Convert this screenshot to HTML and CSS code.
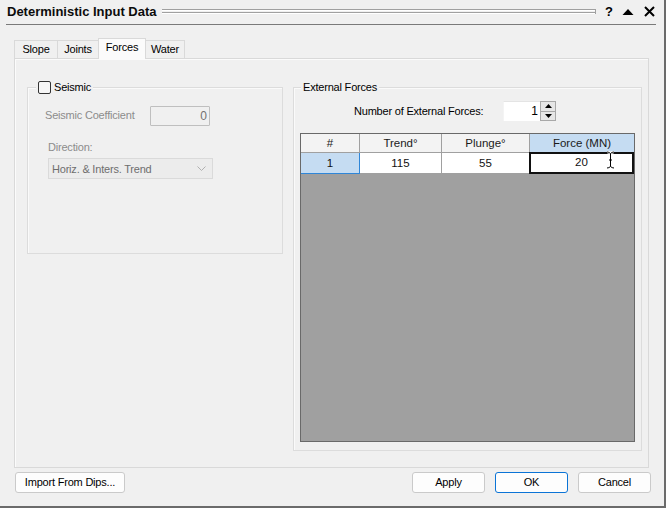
FILE: index.html
```html
<!DOCTYPE html>
<html>
<head>
<meta charset="utf-8">
<link rel="stylesheet" href="styles.css">
</head>
<body>
<div class="window">
  <div class="titlebar">
    <span class="title">Deterministic Input Data</span>
    <div class="title-lines"><div class="tl"></div><div class="tl"></div></div>
    <span class="tb-help">?</span>
    <svg class="tb-up" width="12" height="8" viewBox="0 0 12 8"><path d="M6 1 L11.5 7 L0.5 7 Z" fill="#000"/></svg>
    <svg class="tb-close" width="11" height="11" viewBox="0 0 11 11"><path d="M1 1 L10 10 M10 1 L1 10" stroke="#000" stroke-width="2"/></svg>
  </div>

  <div class="tabs">
    <div class="tab t-slope">Slope</div>
    <div class="tab t-joints">Joints</div>
    <div class="tab t-forces active">Forces</div>
    <div class="tab t-water">Water</div>
  </div>

  <div class="panel">
    <div class="group seismic">
      <div class="group-title"><span class="checkbox"></span><span class="cb-label">Seismic</span></div>
      <div class="row coef">
        <span class="lbl dis">Seismic Coefficient</span>
        <div class="numbox dis-box">0</div>
      </div>
      <div class="dir-lbl dis">Direction:</div>
      <div class="combo">
        <span>Horiz. &amp; Inters. Trend</span>
        <svg width="9" height="6" viewBox="0 0 9 6"><path d="M0.5 0.5 L4.5 4.5 L8.5 0.5" fill="none" stroke="#b0b0b0" stroke-width="1"/></svg>
      </div>
    </div>

    <div class="group external">
      <div class="group-title ext-title">External Forces</div>
      <div class="row count">
        <span class="lbl count-lbl">Number of External Forces:</span>
        <div class="spin-input">1</div>
        <div class="spin-btns">
          <div class="sb"><svg width="7" height="4" viewBox="0 0 7 4"><path d="M3.5 0 L7 4 L0 4 Z" fill="#000"/></svg></div>
          <div class="sb"><svg width="7" height="4" viewBox="0 0 7 4"><path d="M0 0 L7 0 L3.5 4 Z" fill="#000"/></svg></div>
        </div>
      </div>
      <div class="grid">
        <div class="hc">#</div>
        <div class="hc">Trend°</div>
        <div class="hc">Plunge°</div>
        <div class="hc hsel">Force (MN)</div>
        <div class="dc dsel">1</div>
        <div class="dc">115</div>
        <div class="dc">55</div>
        <div class="dc dedit">20</div>
        <div class="gfill"></div>
        <svg class="ibeam" width="9" height="18" viewBox="0 0 9 18"><path d="M1 1 Q3 1 4.5 2.5 Q6 1 8 1 M4.5 2.5 L4.5 15.5 M1 17 Q3 17 4.5 15.5 Q6 17 8 17 M3 9 L6 9" fill="none" stroke="#fff" stroke-width="2.6"/><path d="M1 1 Q3 1 4.5 2.5 Q6 1 8 1 M4.5 2.5 L4.5 15.5 M1 17 Q3 17 4.5 15.5 Q6 17 8 17 M3 9 L6 9" fill="none" stroke="#000" stroke-width="1"/></svg>
      </div>
    </div>
  </div>

  <div class="buttons">
    <div class="btn import">Import From Dips...</div>
    <div class="spacer"></div>
    <div class="btn">Apply</div>
    <div class="btn ok">OK</div>
    <div class="btn">Cancel</div>
  </div>
</div>
</body>
</html>
```

FILE: styles.css
```css
* { box-sizing: border-box; }
html, body { margin: 0; padding: 0; background: #f0f0f0; }
body {
  font-family: "Liberation Sans", Arial, sans-serif;
  font-size: 11px;
  color: #000;
}
.window {
  width: 666px;
  height: 508px;
  background: #f0f0f0;
  border-right: 2px solid #6b6b6b;
  border-bottom: 2px solid #6b6b6b;
  position: relative;
  overflow: hidden;
}
.titlebar {
  height: 25px;
  margin: 0 8px 0 6px;
  border-bottom: 1px solid #7a7a7a;
  display: flex;
  align-items: center;
  padding-left: 1px;
}
.title {
  font-weight: bold;
  font-size: 13px;
  color: #0c0c0c;
  margin-top: -1px;
}
.title-lines {
  flex: 1;
  margin: -1px 0 0 5px;
  height: 5px;
  border-right: 1px solid #a0a0a0;
  display: flex;
  flex-direction: column;
  justify-content: space-between;
}
.tl {
  height: 2px;
  border-top: 1px solid #a0a0a0;
  background: #ffffff;
}
.tb-help {
  font-weight: bold;
  font-size: 13px;
  margin-left: 9px;
  width: 10px;
  margin-top: -2px;
}
.tb-up { margin-left: 7px; margin-top: -1px; }
.tb-close { margin-left: 10px; margin-right: 1px; margin-top: -1px; }

.tabs {
  display: flex;
  align-items: flex-end;
  margin: 13px 0 0 14px;
  height: 20px;
  position: relative;
  z-index: 2;
}
.tab {
  height: 18px;
  border: 1px solid #d9d9d9;
  border-bottom: none;
  background: #f0f0f0;
  text-align: center;
  line-height: 17px;
  font-size: 11px;
  letter-spacing: -0.2px;
  margin-right: -1px;
}
.t-slope { width: 44px; }
.t-joints { width: 42px; }
.t-forces { width: 48px; }
.t-water { width: 40px; }
.tab.active {
  height: 21px;
  margin-bottom: -1px;
  background: #fbfbfb;
  line-height: 17px;
  position: relative;
  z-index: 3;
}

.panel {
  margin-left: 14px;
  width: 635px;
  height: 410px;
  border: 1px solid #d9d9d9;
  box-shadow: inset 1px 1px 0 #fbfbfb;
  background: #f0f0f0;
  display: flex;
  align-items: flex-start;
  padding: 28px 0 0 12px;
  gap: 10px;
}
.group {
  border: 1px solid #dcdcdc;
  box-shadow: inset 1px 1px 0 #fafafa;
}
.group-title {
  display: flex;
  width: fit-content;
  align-items: center;
  height: 13px;
  line-height: 13px;
  margin: -7px 0 0 8px;
  padding: 0 2px;
  background: #f0f0f0;
}
.seismic { width: 256px; height: 167px; }
.external { width: 349px; height: 364px; }
.checkbox {
  width: 13px;
  height: 13px;
  border: 1px solid #333;
  border-radius: 2px;
  background: #f6f6f6;
}
.cb-label { margin-left: 3px; letter-spacing: -0.2px; }
.ext-title { margin-left: 7px; letter-spacing: -0.2px; }

.row { display: flex; align-items: center; }
.dis { color: #8c8c8c; letter-spacing: -0.2px; }
.coef { margin-top: 12px; height: 20px; padding-left: 17px; }
.coef .lbl { width: 105px; margin-top: -3px; }
.numbox {
  width: 60px;
  height: 20px;
  border: 1px solid #bfbfbf;
  border-radius: 1px;
  text-align: right;
  padding-right: 2px;
  line-height: 18px;
  font-size: 12px;
  color: #707070;
}
.dir-lbl { margin-top: 15px; padding-left: 20px; height: 13px; line-height: 13px; }
.combo {
  margin: 4px 0 0 20px;
  width: 165px;
  height: 21px;
  border: 1px solid #dadada;
  background: #ececec;
  display: flex;
  align-items: center;
  justify-content: space-between;
  padding: 0 6px 0 3px;
  color: #6e6e6e;
  letter-spacing: -0.2px;
}

.count { margin-top: 7px; height: 20px; padding-left: 60px; }
.count-lbl { width: 149px; letter-spacing: -0.2px; }
.spin-input {
  width: 37px;
  height: 20px;
  background: #fff;
  border-top: 1px solid #e4e4e4;
  border-left: 1px solid #f4f4f4;
  text-align: right;
  padding-right: 2px;
  line-height: 19px;
  font-size: 12px;
}
.spin-btns {
  width: 16px;
  height: 20px;
  border: 1px solid #a8a8a8;
  background: #e6e6e6;
  display: flex;
  flex-direction: column;
}
.sb {
  flex: 1;
  display: flex;
  align-items: center;
  justify-content: center;
}
.sb + .sb { border-top: 1px solid #a8a8a8; }

.grid {
  margin: 12px 0 0 6px;
  width: 335px;
  height: 309px;
  border: 1px solid #696969;
  display: grid;
  grid-template-columns: 59px 82px 88px 1fr;
  grid-template-rows: 19px 21px 1fr;
  position: relative;
  font-size: 11.5px;
}
.hc {
  background: #f3f3f3;
  border-right: 1px solid #a0a0a0;
  border-bottom: 1px solid #a0a0a0;
  text-align: center;
  line-height: 18px;
  color: #1a1a1a;
}
.hc.hsel { background: #c5dcf2; border-right: none; }
.dc {
  background: #fff;
  border-right: 1px solid #a0a0a0;
  border-bottom: 1px solid #a0a0a0;
  text-align: center;
  line-height: 20px;
  color: #111;
}
.dc.dsel { background: #c5dcf2; border-right: 1px solid #2f86d8; border-bottom: 1px solid #2f86d8; }
.dc.dedit { border: 2px solid #111; line-height: 17px; margin: -1px 0 0 -1px; }
.gfill { grid-column: 1 / -1; background: #a0a0a0; }
.ibeam { position: absolute; left: 305px; top: 17px; }

.buttons {
  display: flex;
  margin: 4px 0 0 15px;
  height: 21px;
  gap: 10px;
  width: 636px;
}
.spacer { flex: 1; }
.btn {
  width: 73px;
  height: 21px;
  border: 1px solid #cacaca;
  border-radius: 3px;
  background: #fdfdfd;
  text-align: center;
  line-height: 19px;
  letter-spacing: -0.2px;
}
.btn.import { width: 110px; }
.btn.ok { border-color: #0b74d6; }
```
